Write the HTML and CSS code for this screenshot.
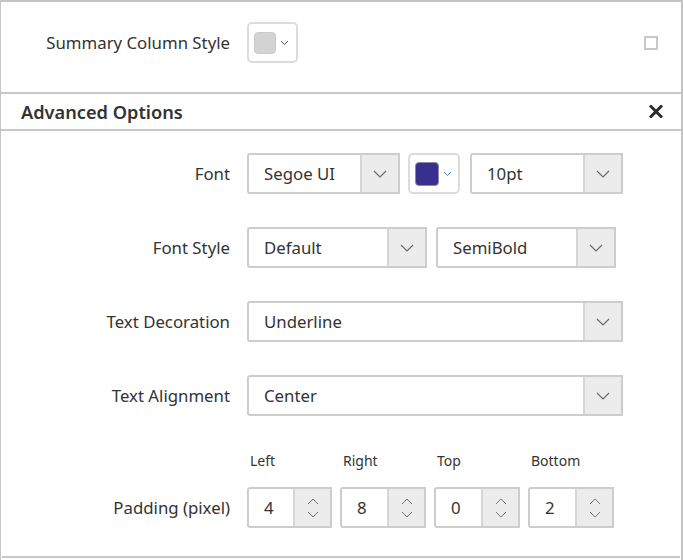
FILE: index.html
```html
<!DOCTYPE html>
<html>
<head>
<meta charset="utf-8">
<link rel="stylesheet" href="styles.css">
</head>
<body>
<div class="panel">
  <div class="summary">
    <div class="label">Summary Column Style</div>
    <div class="color-pick">
      <span class="swatch swatch-gray"></span>
      <svg class="mini-chev" width="9" height="6" viewBox="0 0 9 6"><path d="M1 1 L4.5 4.5 L8 1" fill="none" stroke="#555" stroke-width="1"/></svg>
    </div>
    <div class="spacer"></div>
    <span class="checkbox"></span>
  </div>
  <div class="section-header">
    <span class="title">Advanced Options</span>
    <svg class="close" width="14" height="13" viewBox="0 0 14 13"><path d="M2 1.5 L12 11.5 M12 1.5 L2 11.5" stroke="#2b2b2b" stroke-width="3" stroke-linecap="square"/></svg>
  </div>
  <div class="form">
    <div class="label">Font</div>
    <div class="controls">
      <div class="select w153"><span class="val">Segoe UI</span><span class="btn"><svg width="14" height="8" viewBox="0 0 14 8"><path d="M1 1 L7 7 L13 1" fill="none" stroke="#666" stroke-width="1.1"/></svg></span></div>
      <div class="color-pick"><span class="swatch swatch-purple"></span><svg class="mini-chev" width="9" height="6" viewBox="0 0 9 6"><path d="M1 1 L4.5 4.5 L8 1" fill="none" stroke="#4a79b5" stroke-width="1"/></svg></div>
      <div class="select w153"><span class="val">10pt</span><span class="btn"><svg width="14" height="8" viewBox="0 0 14 8"><path d="M1 1 L7 7 L13 1" fill="none" stroke="#666" stroke-width="1.1"/></svg></span></div>
    </div>

    <div class="label">Font Style</div>
    <div class="controls">
      <div class="select w180"><span class="val">Default</span><span class="btn"><svg width="14" height="8" viewBox="0 0 14 8"><path d="M1 1 L7 7 L13 1" fill="none" stroke="#666" stroke-width="1.1"/></svg></span></div>
      <div class="select w180"><span class="val">SemiBold</span><span class="btn"><svg width="14" height="8" viewBox="0 0 14 8"><path d="M1 1 L7 7 L13 1" fill="none" stroke="#666" stroke-width="1.1"/></svg></span></div>
    </div>

    <div class="label">Text Decoration</div>
    <div class="controls">
      <div class="select w376"><span class="val">Underline</span><span class="btn"><svg width="14" height="8" viewBox="0 0 14 8"><path d="M1 1 L7 7 L13 1" fill="none" stroke="#666" stroke-width="1.1"/></svg></span></div>
    </div>

    <div class="label">Text Alignment</div>
    <div class="controls">
      <div class="select w376"><span class="val">Center</span><span class="btn"><svg width="14" height="8" viewBox="0 0 14 8"><path d="M1 1 L7 7 L13 1" fill="none" stroke="#666" stroke-width="1.1"/></svg></span></div>
    </div>

    <div class="label padlabel">Padding (pixel)</div>
    <div class="padding">
      <div class="spin-col"><span class="cap">Left</span><div class="spin"><span class="num">4</span><span class="sbtn"><svg width="12" height="22" viewBox="0 0 12 22"><path d="M1 7 L6 2 L11 7 M1 15 L6 20 L11 15" fill="none" stroke="#777" stroke-width="1"/></svg></span></div></div>
      <div class="spin-col"><span class="cap">Right</span><div class="spin"><span class="num">8</span><span class="sbtn"><svg width="12" height="22" viewBox="0 0 12 22"><path d="M1 7 L6 2 L11 7 M1 15 L6 20 L11 15" fill="none" stroke="#777" stroke-width="1"/></svg></span></div></div>
      <div class="spin-col"><span class="cap">Top</span><div class="spin"><span class="num">0</span><span class="sbtn"><svg width="12" height="22" viewBox="0 0 12 22"><path d="M1 7 L6 2 L11 7 M1 15 L6 20 L11 15" fill="none" stroke="#777" stroke-width="1"/></svg></span></div></div>
      <div class="spin-col"><span class="cap">Bottom</span><div class="spin"><span class="num">2</span><span class="sbtn"><svg width="12" height="22" viewBox="0 0 12 22"><path d="M1 7 L6 2 L11 7 M1 15 L6 20 L11 15" fill="none" stroke="#777" stroke-width="1"/></svg></span></div></div>
    </div>
  </div>
</div>
</body>
</html>
```

FILE: styles.css
```css
html, body {
  margin: 0;
  padding: 0;
  background: #fff;
}
body {
  font-family: "Noto Sans", "Open Sans", sans-serif;
  color: #333;
  font-size: 16.8px;
}
.panel {
  width: 680px;
  height: 558px;
  border-left: 1px solid #c4c4c4;
  border-right: 2px solid #c4c4c4;
  border-top: 2px solid #c4c4c4;
  position: relative;
}
.summary {
  height: 90px;
  display: flex;
  align-items: center;
  padding-right: 23px;
  padding-bottom: 9px;
  box-sizing: border-box;
}
.summary .label {
  width: 229px;
  text-align: right;
  padding-right: 17px;
  box-sizing: content-box;
}
.spacer { flex: 1; }
.color-pick {
  width: 47px;
  height: 37px;
  border: 2px solid #dcdcdc;
  border-radius: 5px;
  display: flex;
  align-items: center;
  padding-left: 5px;
  box-sizing: border-box;
  gap: 4px;
}
.summary .color-pick { width: 51px; height: 41px; }
.swatch {
  width: 22px;
  height: 22px;
  border-radius: 4px;
  border: 1px solid #bbb;
  box-sizing: border-box;
}
.swatch-gray { background: #d3d3d3; border-color: #ccc; }
.swatch-purple { background: #382f8e; border-color: #8a8a9a; width: 24px; height: 24px; }
.mini-chev { display: block; }
.checkbox {
  width: 10px;
  height: 10px;
  border: 2px solid #c8c8c8;
  display: block;
}
.section-header {
  height: 35px;
  border-top: 2px solid #c8c8c8;
  border-bottom: 2px solid #c8c8c8;
  display: flex;
  align-items: center;
  justify-content: space-between;
  padding: 0 18px 0 20px;
}
.section-header .title {
  font-size: 18.2px;
  font-weight: 600;
  color: #333;
}
.close { display: block; }
.form {
  display: grid;
  grid-template-columns: 229px auto;
  column-gap: 17px;
  row-gap: 33px;
  padding-top: 22px;
  align-items: center;
}
.form .label {
  text-align: right;
}
.controls {
  display: flex;
  gap: 9px;
  height: 41px;
}
.controls .color-pick { margin-left: -1px; margin-right: 1px; }
.select {
  display: flex;
  height: 41px;
  border: 2px solid #cdcdcd;
  border-radius: 3px 0 0 3px;
  box-sizing: border-box;
  background: #fff;
}
.w153 { width: 153px; }
.w180 { width: 180px; }
.w376 { width: 376px; }
.select .val {
  flex: 1;
  padding-left: 15px;
  line-height: 37px;
}
.select .btn {
  width: 36px;
  background: #ececec;
  border-left: 2px solid #d6d6d6;
  display: flex;
  align-items: center;
  justify-content: center;
}
.select .btn svg { display: block; }
.controls .color-pick { width: 52px; height: 41px; }
.form .padlabel {
  align-self: end;
  line-height: 41px;
}
.padding {
  display: flex;
  gap: 8px;
  margin-top: 3px;
}
.spin-col {
  display: flex;
  flex-direction: column;
  width: 86px;
}
.spin-col:nth-child(1) { width: 85px; }
.cap {
  font-size: 14px;
  padding-left: 3px;
  height: 18px;
  line-height: 18px;
  margin-bottom: 17px;
}
.spin {
  display: flex;
  height: 41px;
  border: 2px solid #cdcdcd;
  box-sizing: border-box;
  border-radius: 3px 0 0 3px;
}
.spin .num {
  flex: 1;
  padding-left: 15px;
  line-height: 37px;
}
.spin .sbtn {
  width: 35px;
  background: #ececec;
  border-left: 2px solid #d6d6d6;
  display: flex;
  align-items: center;
  justify-content: center;
}
.spin .sbtn svg { display: block; }
.panel::after {
  content: "";
  position: absolute;
  left: 1px;
  right: 1px;
  top: 554px;
  height: 2px;
  background: #c8c8c8;
}
```
